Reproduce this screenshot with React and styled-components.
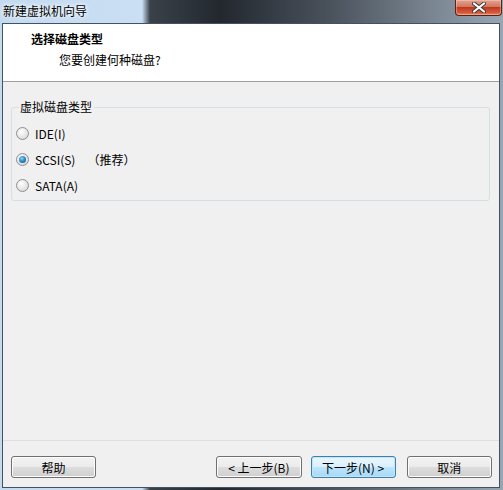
import React, { useState } from 'react';
import styled, { createGlobalStyle } from 'styled-components';

const Global = createGlobalStyle`
  html, body {
    margin: 0;
    padding: 0;
    background: #2b3038;
  }
  * { box-sizing: border-box; }
`;

const Window = styled.div`
  width: 503px;
  height: 490px;
  display: flex;
  flex-direction: column;
  font-family: "Noto Sans CJK SC", "Noto Sans", sans-serif;
  font-size: 12px;
  color: #000;
  background: linear-gradient(to right, #c3daf1 0, #cadff3 142px, #3a4149 150px, #23282f 220px, #4a525c 330px, #7d8995 440px, #98a6b4 100%);
`;

const TitleBar = styled.div`
  height: 23px;
  display: flex;
  align-items: flex-start;
  padding-left: 3px;
`;

const Title = styled.div`
  line-height: 22px;
  font-size: 12px;
  color: #000;
  text-shadow: 0 0 6px #fff, 0 0 4px #fff;
`;

const CloseButton = styled.div`
  margin-left: auto;
  width: 47px;
  height: 16px;
  margin-right: 1px;
  border: 1px solid #5b1f16;
  border-top: none;
  border-radius: 0 0 4px 4px;
  background: linear-gradient(#e3a393 0, #d2765e 45%, #c0391c 50%, #d45b3e 85%, #e88a6c 100%);
  display: flex;
  align-items: center;
  justify-content: center;
  box-shadow: inset 0 0 0 1px rgba(255, 220, 200, 0.4);
`;

const Client = styled.div`
  flex: 1;
  margin: 0 3px 2px 2px;
  border: 1px solid #44515e;
  background: #f0f0f0;
  display: flex;
  flex-direction: column;
`;

const Header = styled.div`
  height: 58px;
  background: #fff;
  border-bottom: 1px solid #a0a0a0;
  padding: 7px 0 0 28px;
`;

const HeaderTitle = styled.div`
  font-weight: bold;
  line-height: 15px;
`;

const HeaderSub = styled.div`
  line-height: 15px;
  margin: 6px 0 0 28px;
`;

const Body = styled.div`
  flex: 1;
  padding: 18px 9px 0 8px;
`;

const Group = styled.fieldset`
  margin: 0;
  height: 101px;
  border: 1px solid #d5dfe5;
  border-radius: 3px;
  padding: 6px 0 0 4px;
`;

const Legend = styled.legend`
  padding: 0 2px 0 1px;
  margin-left: 3px;
  line-height: 14px;
`;

const Option = styled.label`
  display: flex;
  align-items: center;
  height: 26px;
  gap: 6px;
  cursor: default;
`;

const Radio = styled.span`
  width: 13px;
  height: 13px;
  border-radius: 50%;
  border: 1px solid #8f8f8f;
  background: radial-gradient(circle at 40% 35%, #ffffff 0, #eaeaea 45%, #cfcfcf 100%);
  display: flex;
  align-items: center;
  justify-content: center;

  &::after {
    content: '';
    width: 7px;
    height: 7px;
    border-radius: 50%;
    display: ${(p) => (p.$checked ? 'block' : 'none')};
    background: radial-gradient(circle at 40% 35%, #8fd3fb 0, #2a86c6 50%, #10517e 100%);
  }
`;

const Note = styled.span`
  margin-left: 6px;
`;

const Footer = styled.div`
  border-top: 1px solid #dfdfdf;
  height: 47px;
  display: flex;
  align-items: flex-start;
  padding: 15px 7px 0 8px;
`;

const Button = styled.button`
  width: 86px;
  height: 22px;
  padding: 0;
  font-family: inherit;
  font-size: 12px;
  color: #000;
  border: 1px solid ${(p) => (p.$primary ? '#3c7fb1' : '#707070')};
  border-radius: 3px;
  background: ${(p) =>
    p.$primary
      ? 'linear-gradient(#eaf6fd 0, #d9f0fc 50%, #bee6fd 50%, #a7d9f5 100%)'
      : 'linear-gradient(#f2f2f2 0, #ebebeb 50%, #dddddd 50%, #cfcfcf 100%)'};
  box-shadow: inset 0 0 0 1px ${(p) => (p.$primary ? '#c4e5f6' : '#fcfcfc')};
  margin-left: ${(p) => p.$gap || 0}px;
  outline: none;
`;

const options = [
  { key: 'ide', label: 'IDE(I)' },
  { key: 'scsi', label: 'SCSI(S)', note: '（推荐）' },
  { key: 'sata', label: 'SATA(A)' },
];

export default function App() {
  const [type, setType] = useState('scsi');

  return (
    <Window>
      <Global />
      <TitleBar>
        <Title>新建虚拟机向导</Title>
        <CloseButton>
          <svg width="14" height="11" viewBox="0 0 14 11">
            <path d="M2 1.5 L12 9.5 M12 1.5 L2 9.5" stroke="#3b3b3b" strokeWidth="4" strokeLinecap="round" />
            <path d="M2 1.5 L12 9.5 M12 1.5 L2 9.5" stroke="#ffffff" strokeWidth="2.2" strokeLinecap="round" />
          </svg>
        </CloseButton>
      </TitleBar>
      <Client>
        <Header>
          <HeaderTitle>选择磁盘类型</HeaderTitle>
          <HeaderSub>您要创建何种磁盘?</HeaderSub>
        </Header>
        <Body>
          <Group>
            <Legend>虚拟磁盘类型</Legend>
            {options.map((o) => (
              <Option key={o.key} onClick={() => setType(o.key)}>
                <Radio $checked={type === o.key} />
                <span>{o.label}</span>
                {o.note && <Note>{o.note}</Note>}
              </Option>
            ))}
          </Group>
        </Body>
        <Footer>
          <Button>帮助</Button>
          <Button $gap={120}>&lt; 上一步(B)</Button>
          <Button $primary $gap={9}>下一步(N) &gt;</Button>
          <Button $gap={11}>取消</Button>
        </Footer>
      </Client>
    </Window>
  );
}
